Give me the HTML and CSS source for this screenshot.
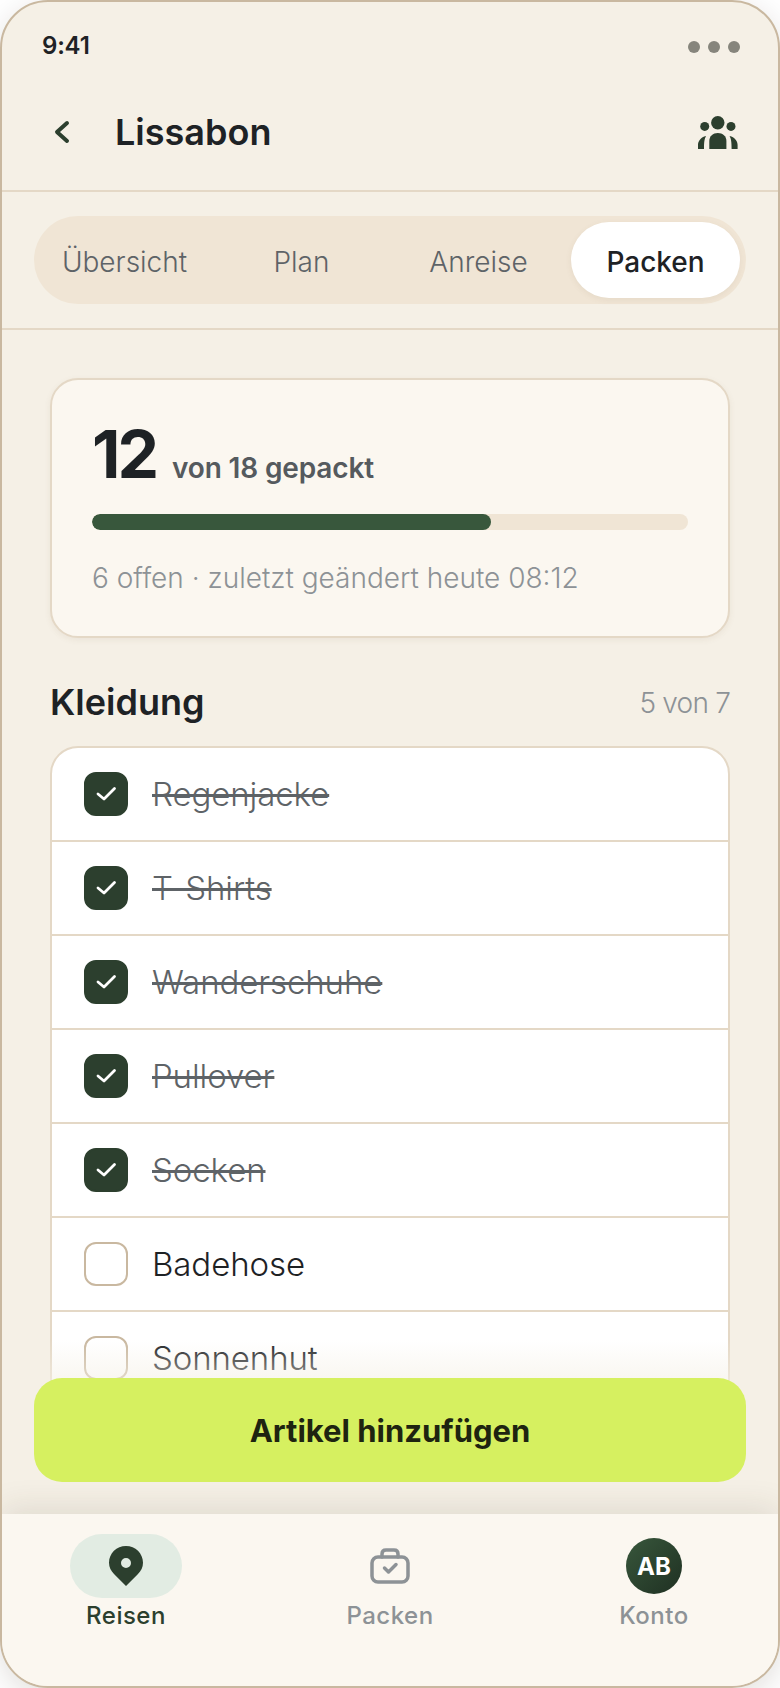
FILE: index.html
```html
<!DOCTYPE html>
<html lang="de">
<head>
<meta charset="utf-8">
<title>Lissabon – Packen</title>
<link rel="stylesheet" href="styles.css">
</head>
<body>
<div class="phone">
  <div class="status">
    <span class="time">9:41</span>
    <span class="dots"><i></i><i></i><i></i></span>
  </div>
  <header class="header">
    <div class="header-left">
      <svg class="back" width="20" height="24" viewBox="0 0 20 24"><path d="M15 3 5 12l10 9" fill="none" stroke="#2c3f2e" stroke-width="4" stroke-linecap="round" stroke-linejoin="round"/></svg>
      <h1 class="title">Lissabon</h1>
    </div>
    <svg class="people" width="40" height="33" viewBox="0 0 40 33" fill="#2c3f2e">
      <circle cx="19.800" cy="6.700" r="6.700"/>
      <circle cx="6.700" cy="10.400" r="4.500"/>
      <circle cx="33" cy="10.400" r="4.500"/>
      <path d="M11.300 33V25C11.300 20 15 17 19.800 17 24.700 17 28.400 20 28.400 25V33Z"/>
      <path d="M0 33V29C0 25 3 21 8 20 6.500 23 6 26 6 33Z"/>
      <path d="M39.600 33V29C39.600 25 36.600 21 31.600 20 33.100 23 33.600 26 33.600 33Z"/>
    </svg>
  </header>
  <nav class="tabs-wrap">
    <div class="tabs">
      <span class="tab">Übersicht</span>
      <span class="tab">Plan</span>
      <span class="tab">Anreise</span>
      <span class="tab active">Packen</span>
    </div>
  </nav>
  <main class="content">
    <section class="summary">
      <div class="count"><span class="num">12</span><span class="of">von 18 gepackt</span></div>
      <div class="bar"><div class="fill"></div></div>
      <p class="meta">6 offen · zuletzt geändert heute 08:12</p>
    </section>
    <div class="section-head">
      <h2 class="section-title">Kleidung</h2>
      <span class="section-count">5 von 7</span>
    </div>
    <ul class="list">
      <li class="row done"><span class="check"><svg width="22" height="22" viewBox="0 0 22 22"><path d="M3 11l6 5L19.500 5.500" fill="none" stroke="#fff" stroke-width="2.800" stroke-linecap="round" stroke-linejoin="round"/></svg></span><span class="label">Regenjacke</span></li>
      <li class="row done"><span class="check"><svg width="22" height="22" viewBox="0 0 22 22"><path d="M3 11l6 5L19.500 5.500" fill="none" stroke="#fff" stroke-width="2.800" stroke-linecap="round" stroke-linejoin="round"/></svg></span><span class="label">T-Shirts</span></li>
      <li class="row done"><span class="check"><svg width="22" height="22" viewBox="0 0 22 22"><path d="M3 11l6 5L19.500 5.500" fill="none" stroke="#fff" stroke-width="2.800" stroke-linecap="round" stroke-linejoin="round"/></svg></span><span class="label">Wanderschuhe</span></li>
      <li class="row done"><span class="check"><svg width="22" height="22" viewBox="0 0 22 22"><path d="M3 11l6 5L19.500 5.500" fill="none" stroke="#fff" stroke-width="2.800" stroke-linecap="round" stroke-linejoin="round"/></svg></span><span class="label">Pullover</span></li>
      <li class="row done"><span class="check"><svg width="22" height="22" viewBox="0 0 22 22"><path d="M3 11l6 5L19.500 5.500" fill="none" stroke="#fff" stroke-width="2.800" stroke-linecap="round" stroke-linejoin="round"/></svg></span><span class="label">Socken</span></li>
      <li class="row"><span class="check"></span><span class="label">Badehose</span></li>
      <li class="row"><span class="check"></span><span class="label">Sonnenhut</span></li>
    </ul>
    <div class="cta-wrap"><button class="cta">Artikel hinzufügen</button></div>
  </main>
  <footer class="tabbar">
    <div class="nav-item current">
      <span class="nav-icon pill">
        <svg width="34" height="40" viewBox="0 0 34 40"><path fill-rule="evenodd" fill="#2c3f2e" d="M17 0C26.400 0 34 7.300 34 16.800 34 21.500 32 25 29 28L17 40 5 28C2 25 0 21.500 0 16.800 0 7.300 7.600 0 17 0ZM17 12a5 5 0 1 0 0 10 5 5 0 0 0 0-10Z"/></svg>
      </span>
      <span class="nav-label">Reisen</span>
    </div>
    <div class="nav-item">
      <span class="nav-icon">
        <svg width="40" height="36" viewBox="0 0 40 36" fill="none" stroke="#8d9296" stroke-width="3.500" stroke-linecap="round" stroke-linejoin="round"><rect x="2" y="9" width="36" height="25" rx="6"/><path d="M12 9V6c0-2.500 1.500-4 4-4h8c2.500 0 4 1.500 4 4v3"/><path d="M14.500 20l4 4L26 16.500"/></svg>
      </span>
      <span class="nav-label">Packen</span>
    </div>
    <div class="nav-item">
      <span class="nav-icon"><span class="avatar">AB</span></span>
      <span class="nav-label">Konto</span>
    </div>
  </footer>
</div>
</body>
</html>
```
FILE: styles.css
```css
* { box-sizing: border-box; margin: 0; padding: 0; }
html, body { width: 780px; height: 1688px; background: #fff; overflow: hidden; }
body { font-family: Inter, "Noto Sans", sans-serif; color: #1e2225; }

.phone {
  width: 780px; height: 1688px;
  display: flex; flex-direction: column;
  background: #f5f0e6;
  border: 2px solid #c9b8a0;
  border-radius: 48px;
  overflow: hidden;
  box-shadow: 0 8px 30px rgba(40, 30, 10, .14);
}

.status {
  height: 90px; flex: none;
  padding: 0 38px 0 40px;
  display: flex; align-items: center; justify-content: space-between;
}
.time { margin-top: -3px; font-size: 24px; font-weight: 600; letter-spacing: -0.2px; }
.dots { display: flex; gap: 8px; }
.dots i { width: 12px; height: 12px; border-radius: 50%; background: #86857c; display: block; }

.header {
  height: 100px; flex: none;
  padding: 0 40px 18px 50px;
  display: flex; align-items: center; justify-content: space-between;
  border-bottom: 2px solid #e4d8c6;
}
.header-left { display: flex; align-items: center; gap: 43px; }
.title { font-size: 36px; font-weight: 600; }

.tabs-wrap {
  height: 138px; flex: none;
  padding: 24px 32px 0;
  border-bottom: 2px solid #e4d8c6;
}
.tabs {
  height: 88px; padding: 6px;
  display: grid; grid-template-columns: repeat(4, 1fr); gap: 8px;
  background: #f0e5d5; border-radius: 44px;
}
.tab {
  display: flex; align-items: center; justify-content: center;
  padding-top: 4px;
  font-size: 28px; font-weight: 350; color: #5e6367;
  border-radius: 38px;
}
.tab.active {
  background: #fff; color: #1e2225; font-weight: 500;
  box-shadow: 0 2px 6px rgba(120, 90, 50, .08);
}

.content {
  flex: 1; min-height: 0; position: relative;
  padding: 48px 48px 0;
  overflow: hidden;
}

.summary {
  height: 260px;
  padding: 36px 40px 0;
  background: #fbf7f0;
  border: 2px solid #e4d8c6;
  border-radius: 28px;
  box-shadow: 0 2px 6px rgba(120, 90, 50, .08);
}
.count { display: flex; align-items: baseline; gap: 16px; height: 84px; }
.num { font-size: 66px; line-height: 76px; font-weight: 700; letter-spacing: -3px; }
.of { font-size: 28px; font-weight: 600; color: #555a5e; letter-spacing: -0.15px; }
.bar { height: 16px; margin-top: 14px; border-radius: 8px; background: #f0e5d5; overflow: hidden; }
.fill { width: 67%; height: 100%; border-radius: 8px; background: #38573c; }
.meta { margin-top: 31px; font-size: 28px; font-weight: 300; color: #8d9296; }

.section-head {
  height: 108px; padding-top: 20px;
  display: flex; align-items: center; justify-content: space-between;
}
.section-title { font-size: 36px; font-weight: 600; }
.section-count { margin-top: 2px; font-size: 28px; font-weight: 300; color: #8d9296; letter-spacing: -0.8px; }

.list {
  list-style: none;
  background: #fff;
  border: 2px solid #e4d8c6;
  border-radius: 28px;
  overflow: hidden;
}
.row {
  height: 94px; padding: 0 32px;
  display: flex; align-items: center; gap: 24px;
  border-bottom: 2px solid #e4d8c6;
}
.check {
  width: 44px; height: 44px; flex: none;
  border: 2px solid #c9b8a0; border-radius: 12px;
  display: flex; align-items: center; justify-content: center;
}
.label { font-size: 33px; font-weight: 350; letter-spacing: -0.1px; color: #1e2225; }
.done .check { background: #2c3f2e; border-color: #2c3f2e; }
.done .label { color: #5e6367; text-decoration: line-through; }

.cta-wrap {
  position: absolute; left: 0; right: 0; bottom: 0;
  padding: 38px 32px 32px;
  background: linear-gradient(to bottom, rgba(245, 240, 230, 0), #f5f0e6 70px);
}
.cta {
  display: block; width: 100%; height: 104px;
  background: #d6f060; border: 0; border-radius: 28px;
  font: 700 31px Inter, sans-serif; color: #1e2410;
}

.tabbar {
  height: 172px; flex: none; position: relative;
  padding: 20px 68px 0;
  display: flex; justify-content: space-between;
  background: #fbf7f0;
  box-shadow: 0 -8px 28px rgba(60, 50, 30, .1);
}
.nav-item { width: 112px; display: flex; flex-direction: column; align-items: center; }
.nav-icon { width: 112px; height: 64px; display: flex; align-items: center; justify-content: center; border-radius: 32px; }
.pill { background: #e2ece3; }
.avatar {
  width: 56px; height: 56px; border-radius: 50%;
  display: flex; align-items: center; justify-content: center;
  background: linear-gradient(135deg, #38573c, #1f3022);
  color: #fff; font-size: 24px; font-weight: 700;
}
.nav-label { margin-top: 3px; font-size: 24px; font-weight: 500; letter-spacing: .5px; color: #8d9296; }
.current .nav-label { color: #2c3f2e; }
```
